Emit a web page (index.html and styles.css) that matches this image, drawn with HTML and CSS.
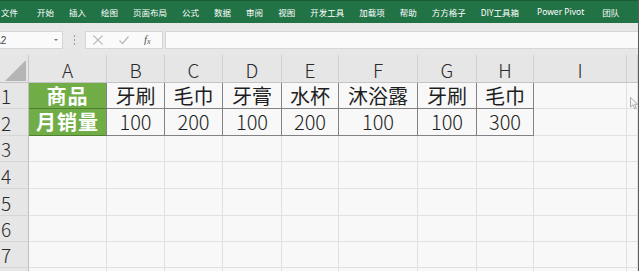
FILE: index.html
```html
<!DOCTYPE html>
<html lang="zh-CN">
<head>
<meta charset="utf-8">
<title>Excel</title>
<link rel="stylesheet" href="styles.css">
</head>
<body>
<div class="app">
  <div class="ribbon">
    <span class="tab first">文件</span>
    <span class="tab">开始</span>
    <span class="tab">插入</span>
    <span class="tab">绘图</span>
    <span class="tab">页面布局</span>
    <span class="tab">公式</span>
    <span class="tab">数据</span>
    <span class="tab">审阅</span>
    <span class="tab">视图</span>
    <span class="tab">开发工具</span>
    <span class="tab">加载项</span>
    <span class="tab">帮助</span>
    <span class="tab">方方格子</span>
    <span class="tab">DIY工具箱</span>
    <span class="tab latin">Power Pivot</span>
    <span class="tab last">团队</span>
  </div>
  <div class="fbar">
    <div class="namebox">
      <span class="nb-text">A2</span>
      <span class="nb-arrow"></span>
    </div>
    <div class="dots"><i></i><i></i><i></i></div>
    <div class="fbtns">
      <svg class="ico" width="12" height="12" viewBox="0 0 12 12"><path d="M1.5 1.5 L10.5 10.5 M10.5 1.5 L1.5 10.5" stroke="#b9b9b9" stroke-width="1.1" fill="none"/></svg>
      <svg class="ico" width="12" height="12" viewBox="0 0 12 12"><path d="M1.5 6.5 L4.5 9.5 L10.5 2.5" stroke="#b9b9b9" stroke-width="1.2" fill="none"/></svg>
      <span class="fx">f<sub>x</sub></span>
    </div>
    <div class="finput"></div>
  </div>
  <div class="sheet">
    <div class="corner"><svg width="29" height="28" viewBox="0 0 29 28"><polygon points="5,26 26,26 26,5" fill="#b5b5b5"/></svg></div>
    <div class="ch">A</div><div class="ch">B</div><div class="ch">C</div><div class="ch">D</div><div class="ch">E</div><div class="ch">F</div><div class="ch">G</div><div class="ch">H</div><div class="ch">I</div><div class="ch"></div>

    <div class="rh">1</div>
    <div class="c d g">商品</div><div class="c d">牙刷</div><div class="c d">毛巾</div><div class="c d">牙膏</div><div class="c d">水杯</div><div class="c d">沐浴露</div><div class="c d">牙刷</div><div class="c d">毛巾</div><div class="c"></div><div class="c"></div>

    <div class="rh">2</div>
    <div class="c d g">月销量</div><div class="c d n">100</div><div class="c d n">200</div><div class="c d n">100</div><div class="c d n">200</div><div class="c d n">100</div><div class="c d n">100</div><div class="c d n">300</div><div class="c"></div><div class="c"></div>

    <div class="rh">3</div><div class="c"></div><div class="c"></div><div class="c"></div><div class="c"></div><div class="c"></div><div class="c"></div><div class="c"></div><div class="c"></div><div class="c"></div><div class="c"></div>
    <div class="rh">4</div><div class="c"></div><div class="c"></div><div class="c"></div><div class="c"></div><div class="c"></div><div class="c"></div><div class="c"></div><div class="c"></div><div class="c"></div><div class="c"></div>
    <div class="rh">5</div><div class="c"></div><div class="c"></div><div class="c"></div><div class="c"></div><div class="c"></div><div class="c"></div><div class="c"></div><div class="c"></div><div class="c"></div><div class="c"></div>
    <div class="rh">6</div><div class="c"></div><div class="c"></div><div class="c"></div><div class="c"></div><div class="c"></div><div class="c"></div><div class="c"></div><div class="c"></div><div class="c"></div><div class="c"></div>
    <div class="rh">7</div><div class="c"></div><div class="c"></div><div class="c"></div><div class="c"></div><div class="c"></div><div class="c"></div><div class="c"></div><div class="c"></div><div class="c"></div><div class="c"></div>
    <div class="rh"></div><div class="c"></div><div class="c"></div><div class="c"></div><div class="c"></div><div class="c"></div><div class="c"></div><div class="c"></div><div class="c"></div><div class="c"></div><div class="c"></div>
  </div>
  <svg class="pointer" width="9" height="13" viewBox="0 0 9 13"><path d="M0.5 0.5 L0.5 10 L3 7.8 L4.8 12 L6.3 11.3 L4.6 7.3 L7.8 7.3 Z" fill="#f4f4f4" stroke="#a8a8a8" stroke-width="0.9"/></svg>
</div>
</body>
</html>
```

FILE: styles.css
```css
* { box-sizing: border-box; }
html, body { margin: 0; padding: 0; }
body {
  width: 639px;
  height: 271px;
  overflow: hidden;
  background: #f8f8f8;
  font-family: "Noto Sans CJK SC", "Noto Sans", sans-serif;
}
.app {
  position: relative;
  width: 639px;
  height: 271px;
  overflow: hidden;
  border-right: 1px solid #5c5c5c;
  background: #e7e7e7;
}
.ribbon {
  height: 23px;
  background: #217346;
  border-top: 1px solid #1a5c3a;
  display: flex;
  align-items: center;
  gap: 15px;
  padding-left: 1px;
  color: #ffffff;
  font-size: 8.5px;
  white-space: nowrap;
}
.tab { line-height: 1; font-family: "Noto Sans CJK SC", sans-serif; }
.tab.first { margin-right: 4px; }
.tab.latin { font-family: "Noto Sans", "Noto Sans CJK SC", sans-serif; margin-left: 3px; font-size: 8.5px; }
.tab.last { margin-left: 3px; }
.fbar {
  height: 32px;
  padding-top: 8px;
  padding-bottom: 6px;
  display: flex;
  align-items: stretch;
}
.namebox {
  width: 63px;
  background: #fafafa;
  border: 1px solid #d6d6d6;
  border-left: none;
  position: relative;
  display: flex;
  align-items: center;
  overflow: hidden;
}
.nb-text {
  font-size: 10px;
  color: #444;
  margin-left: -6px;
  font-family: "Liberation Sans", sans-serif;
}
.nb-arrow {
  position: absolute;
  right: 4px;
  top: 7px;
  width: 0; height: 0;
  border-left: 2px solid transparent;
  border-right: 2px solid transparent;
  border-top: 2px solid #777;
}
.dots {
  width: 22px;
  display: flex;
  flex-direction: column;
  align-items: center;
  justify-content: center;
  gap: 2px;
}
.dots i {
  display: block;
  width: 1px; height: 2px;
  background: #9a9a9a;
}
.fbtns {
  width: 78px;
  background: #fafafa;
  border: 1px solid #d6d6d6;
  display: flex;
  align-items: center;
  padding-left: 6px;
  gap: 14px;
}
.ico { display: block; }
.fx {
  font-family: "Liberation Serif", serif;
  font-style: italic;
  font-size: 11px;
  color: #555;
  line-height: 1;
}
.fx sub { font-size: 8px; vertical-align: -1px; }
.finput {
  flex: 1;
  margin-left: 2px;
  background: #fafafa;
  border: 1px solid #d6d6d6;
  border-right: none;
}
.sheet {
  display: grid;
  grid-template-columns: 29px 78px 58px 58px 59px 57px 79px 59px 57px 93px 1fr;
  grid-template-rows: 28px 26px 27px 26px 27px 27px 26px 26px 10px;
  font-size: 19px;
  color: #262626;
}
.corner, .ch, .rh {
  background: #e6e6e6;
  border-right: 1px solid #d0d0d0;
  border-bottom: 1px solid #c4c4c4;
}
.corner { border-right: 1px solid #c8c8c8; }
.ch {
  display: flex;
  align-items: center;
  justify-content: center;
  font-family: "Noto Sans CJK SC", sans-serif;
  font-weight: 300;
  font-size: 19px;
  line-height: 1;
  padding-top: 1px;
  color: #2b2b2b;
}
.rh {
  display: flex;
  align-items: center;
  padding-left: 1px;
  font-weight: 300;
  font-size: 19px;
  line-height: 1;
  color: #2b2b2b;
  border-right: 1px solid #c0c0c0;
  border-bottom: 1px solid #d6d6d6;
}
.c {
  background: #f8f8f8;
  border-right: 1px solid #e1e1e1;
  border-bottom: 1px solid #e1e1e1;
  display: flex;
  align-items: center;
  justify-content: center;
  line-height: 1;
  white-space: nowrap;
}
.c.d {
  border-right-color: #828282;
  border-bottom-color: #828282;
  font-size: 20px;
  color: #1e1e1e;
}
.c.n { font-weight: 300; font-size: 20px; }
.c.g {
  background: #70ad47;
  color: #ffffff;
  font-weight: 700;
  font-size: 20px;
  letter-spacing: 1px;
  border-bottom-color: #4e7f31;
}
.pointer {
  position: absolute;
  left: 630px;
  top: 97px;
}
```
